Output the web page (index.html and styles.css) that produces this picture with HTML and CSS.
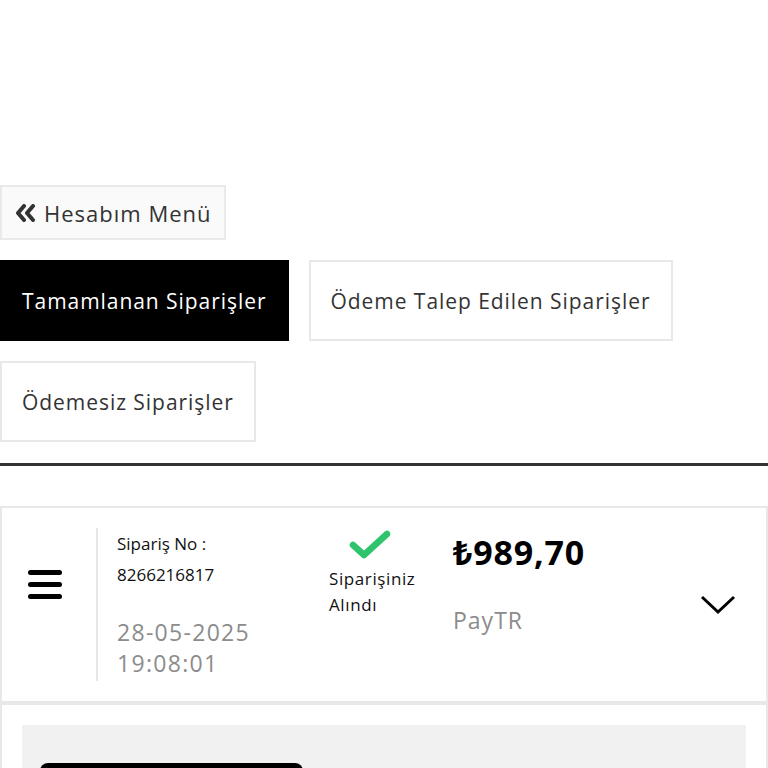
FILE: index.html
```html
<!DOCTYPE html>
<html lang="tr">
<head>
<meta charset="utf-8">
<title>Siparişlerim</title>
<link rel="stylesheet" href="styles.css">
</head>
<body>
<div class="page">
  <a class="back-btn" href="#">
    <svg class="back-icon" width="22" height="18" viewBox="0 0 22 18" aria-hidden="true">
      <path d="M9 2 L3 9 L9 16" fill="none" stroke="#333" stroke-width="4" stroke-linecap="round" stroke-linejoin="round"/>
      <path d="M18 2 L12 9 L18 16" fill="none" stroke="#333" stroke-width="4" stroke-linecap="round" stroke-linejoin="round"/>
    </svg>
    <span>Hesabım Menü</span>
  </a>

  <div class="tabs">
    <div class="tab active">Tamamlanan Siparişler</div>
    <div class="tab">Ödeme Talep Edilen Siparişler</div>
    <div class="tab">Ödemesiz Siparişler</div>
  </div>

  <div class="rule"></div>

  <div class="order-card">
    <div class="menu-col">
      <svg width="34" height="32" viewBox="0 0 34 32" aria-hidden="true">
        <rect x="0" y="1" width="34" height="5" rx="2.5" fill="#000"/>
        <rect x="0" y="13" width="34" height="5" rx="2.5" fill="#000"/>
        <rect x="0" y="25" width="34" height="5" rx="2.5" fill="#000"/>
      </svg>
    </div>
    <div class="info-col">
      <div class="order-label">Sipariş No :</div>
      <div class="order-no">8266216817</div>
      <div class="order-date">28-05-2025<br>19:08:01</div>
    </div>
    <div class="status-col">
      <svg class="check" width="42" height="30" viewBox="0 0 42 30" aria-hidden="true">
        <path d="M4 15 L15 25 L38 4" fill="none" stroke="#2fc46c" stroke-width="6.5" stroke-linecap="round" stroke-linejoin="round"/>
      </svg>
      <div class="status-text">Siparişiniz<br>Alındı</div>
    </div>
    <div class="price-col">
      <div class="price">₺989,70</div>
      <div class="method">PayTR</div>
    </div>
    <div class="toggle-col">
      <svg width="36" height="22" viewBox="0 0 36 22" aria-hidden="true">
        <path d="M2 3 L18 18 L34 3" fill="none" stroke="#000" stroke-width="3"/>
      </svg>
    </div>
  </div>

  <div class="detail-card">
    <div class="detail-box">
      <div class="detail-btn"></div>
    </div>
  </div>
</div>
</body>
</html>
```

FILE: styles.css
```css
* { box-sizing: border-box; }
html, body { margin: 0; padding: 0; background: #fff; }
body {
  font-family: "Open Sans", "Noto Sans", "Liberation Sans", sans-serif;
  color: #333;
  overflow: hidden;
}
.page { padding-top: 185px; }

.back-btn {
  display: flex;
  width: fit-content;
  align-items: center;
  gap: 7px;
  height: 55px;
  padding: 0 12px 0 13px;
  border: 2px solid #e9e9e9;
  background: #fafafa;
  color: #333;
  text-decoration: none;
  font-size: 22px;
  letter-spacing: 1px;
}
.back-icon { margin-top: 1px; }

.tabs {
  display: flex;
  flex-wrap: wrap;
  gap: 20px;
  margin-top: 20px;
}
.tab {
  display: flex;
  align-items: center;
  height: 81px;
  padding: 0 20px;
  border: 2px solid #e8e8e8;
  font-size: 21px;
  letter-spacing: 0.95px;
  color: #333;
  background: #fff;
}
.tab.active { background: #000; border-color: #000; color: #fff; }

.rule { height: 3px; background: #333; margin-top: 21px; }

.order-card {
  display: flex;
  margin-top: 40px;
  height: 197px;
  border: 2px solid #e8e8e8;
}
.menu-col {
  width: 94px;
  display: flex;
  align-items: flex-start;
  justify-content: center;
  padding-right: 8px;
  padding-top: 61px;
}
.info-col {
  width: 233px;
  margin: 20px 0 20px;
  border-left: 2px solid #e6e6e6;
  padding-left: 19px;
  padding-top: 0;
}
.order-label, .order-no { font-size: 17px; line-height: 31px; color: #111; }
.order-date { margin-top: 27px; font-size: 23px; line-height: 31px; color: #8c8c8c; letter-spacing: 1.3px; }

.status-col { width: 124px; padding-top: 22px; }
.check { display: block; margin-left: 20px; }
.status-text { margin-top: 6px; font-size: 17px; line-height: 26px; color: #111; letter-spacing: 0.6px; }

.price-col { flex: 1; padding-top: 24px; }
.price { font-size: 34px; font-weight: 700; color: #000; line-height: 40px; letter-spacing: 0.8px; }
.method { margin-top: 32px; font-size: 23px; color: #8c8c8c; letter-spacing: 1px; }

.toggle-col {
  width: 100px;
  display: flex;
  align-items: center;
  justify-content: center;
  padding-top: 0;
  padding-left: 4px;
}

.detail-card {
  border: 2px solid #e8e8e8;
  padding: 20px 20px 0;
  height: 200px;
}
.detail-box {
  background: #f1f1f1;
  height: 200px;
  padding: 38px 18px 0;
}
.detail-btn {
  width: 263px;
  height: 48px;
  background: #000;
  border-radius: 8px;
}
```
